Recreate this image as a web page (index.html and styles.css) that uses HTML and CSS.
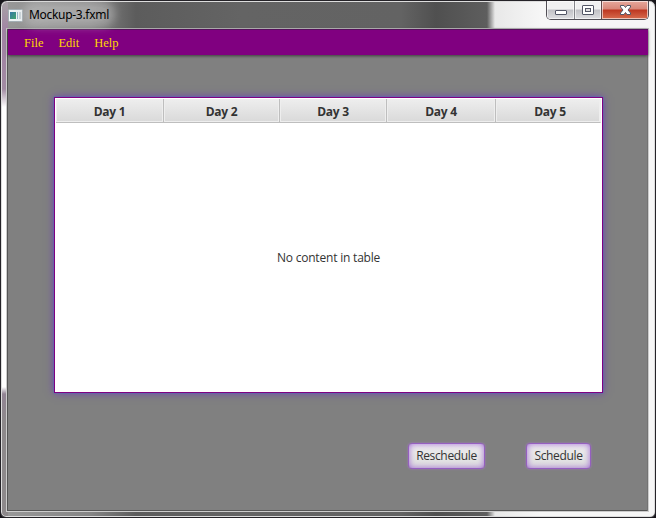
FILE: index.html
```html
<!DOCTYPE html>
<html lang="en">
<head>
<meta charset="utf-8">
<title>Mockup-3.fxml</title>
<link rel="stylesheet" href="styles.css">
</head>
<body>
<div class="window">
  <header class="titlebar">
    <svg class="app-icon" width="15" height="13" viewBox="0 0 15 13"><defs><linearGradient id="app" x2="1" y2="1"><stop stop-color="#3578a8"/><stop offset="1" stop-color="#42a56a"/></linearGradient></defs><rect x=".5" y=".5" width="14" height="12" rx="1" fill="#eef3f5" stroke="#a2adb3"/><path d="M2 3h6v7H2z" fill="url(#app)"/><path d="M9 3h1v7H9z" fill="#94b8c8"/><path d="M11 3h2v7h-2z" fill="#c9d4d9"/></svg>
    <span class="title">Mockup-3.fxml</span>
    <div class="controls">
      <span class="control minimize"><svg width="27" height="18"><rect x="8.5" y="9.5" width="11" height="4" rx=".5" fill="#fff" stroke="#535666"/></svg></span>
      <span class="control maximize"><svg width="26" height="18"><rect x="7.5" y="4.5" width="11" height="9" rx=".5" fill="#fff" stroke="#535666"/><rect x="10.5" y="7.5" width="5" height="3" fill="#ddd" stroke="#535666"/></svg></span>
      <span class="control close"><svg width="46" height="18"><path d="M18.500 4.500h3.500l1.500 2 1.500-2h3.500v1.500L26 9l2.500 3v1.500H25l-1.500-2-1.500 2h-3.500V12L21 9l-2.500-3z" fill="#fff" stroke="#535666"/></svg></span>
    </div>
  </header>
  <main class="client">
    <nav class="menubar"><span>File</span><span>Edit</span><span>Help</span></nav>
    <section class="table">
      <div class="columns"><div>Day 1</div><div>Day 2</div><div>Day 3</div><div>Day 4</div><div>Day 5</div></div>
      <div class="placeholder">No content in table</div>
    </section>
    <div class="actions"><button class="reschedule">Reschedule</button><button class="schedule">Schedule</button></div>
  </main>
</div>
</body>
</html>
```
FILE: styles.css
```css
* { box-sizing: border-box; }
body { margin: 0; background: #17151a; font: 12px "Open Sans", sans-serif; color: #333; }
.window {
  width: 656px; height: 518px; padding: 0 5px 5px 5px;
  border: 1px solid #252328; border-radius: 7px 7px 6px 6px;
  box-shadow: inset 0 0 0 1px #ddd;
  background:
    linear-gradient(#a7a2a6 0, #a184a4 30px, #a184a4 55px, #a18ba2 88px, #fff 106px, #fff 386px, #928494 393px, #8d898b 420px, #8d898b 100%) left / 7px 100% no-repeat,
    linear-gradient(90deg, #999, #858585 90px, #5c5c5c 135px, #646464 240px, #636363 400px, #505050 435px, #5e5e5e 486px, #e8e8e8 494px, #f6f6f6 540px);
}
.titlebar { height: 27px; display: flex; align-items: flex-start; padding-left: 2px; }
.app-icon { margin-top: 8px; }
.title { font: 12px/16px "Noto Sans", sans-serif; color: #000; margin: 6px 0 0 6px; white-space: nowrap; letter-spacing: -.3px; background: rgba(205,205,205,.45); box-shadow: 0 0 8px 6px rgba(205,205,205,.45); border-radius: 8px; height: 14px; }
.controls { margin: 0 1px 0 auto; display: flex; width: 103px; height: 19px; border: 1px solid #514e55; border-top: 0; border-radius: 0 0 5px 5px; overflow: hidden; }
.control { display: block; height: 18px; background: linear-gradient(#f0f0f1 0 8px, #c1c1c6 9px, #dedee1); box-shadow: inset 0 0 0 1px rgba(255,255,255,.6); }
.control svg { display: block; }
.minimize { width: 28px; border-right: 1px solid #85858b; }
.maximize { width: 27px; border-right: 1px solid #65494a; }
.close { width: 46px; background: linear-gradient(#e6a89c 0, #d88779 8px, #bd3721 9px, #d76c4e); }
.client { width: 643px; height: 484px; border: 1px solid #ccc; border-top-color: #bbb; background: #808080; box-shadow: inset 1px 0 #555, inset -1px 0 #737373, inset 0 -1px #555; }
.menubar { height: 26px; margin: 0 0 0 1px; padding: 4px 0 0 16px; display: flex; gap: 15px; background: #800080; color: #ffd700; border-top: 1px solid #55105b; box-shadow: 0 1px 3px rgba(0,0,0,.55); font: 12.5px/18px "Liberation Serif", serif; }
.table { width: 549px; height: 296px; margin: 42px 0 0 47px; border: 1px solid #800080; background: #fff; box-shadow: 0 0 1px #1e70ff, 0 0 8px rgba(101,48,190,.8); padding: 1px; }
.columns { display: grid; grid-template: 24px / 108px 116px 107px 109px 105px; font: bold 12px/25px "Open Sans", sans-serif; letter-spacing: -.25px; }
.columns div { height: 24px; text-align: center; background: linear-gradient(#eee, #d9d9d9); border-right: 1px solid #bebebe; border-bottom: 1px solid #bebebe; box-shadow: inset 0 0 0 1px #eee; }
.columns div:last-child { padding-left: 4px; border-right-color: #eee; }
.placeholder { height: 268px; display: grid; place-items: center; letter-spacing: -.2px; }
.actions { display: flex; margin: 50px 0 0 401px; gap: 41px; }
button { height: 26px; padding: 0 0 2px; border: 1px solid #955fc0; border-radius: 4px; color: #333; font: 12px "Open Sans", sans-serif; letter-spacing: -.35px; background: linear-gradient(#eee, #dedede); box-shadow: inset 0 0 6px rgba(137,63,205,.75), 0 0 2px #a676ce; }
.reschedule { width: 77px; }
.schedule { width: 65px; }
```
